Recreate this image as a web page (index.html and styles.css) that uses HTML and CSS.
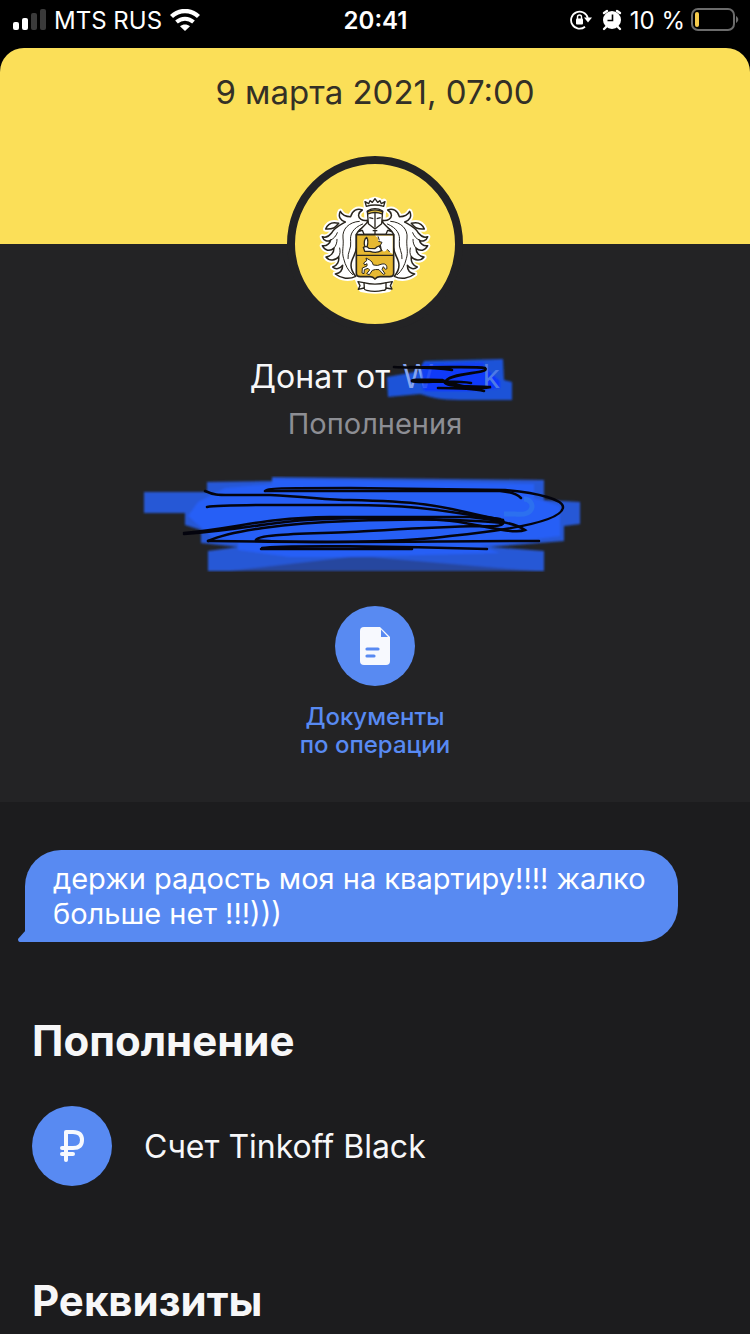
FILE: index.html
```
<!DOCTYPE html>
<html lang="ru">
<head>
    <meta charset="UTF-8">
    <meta name="viewport" content="width=device-width, initial-scale=1.0">
    <title>Операция</title>
    <link rel="stylesheet" href="styles.css">
</head>
<body>

    <div class="status-bar">
        <div class="status-left">
            <svg class="signal" width="34" height="22" viewBox="0 0 34 22" aria-hidden="true">
                <rect x="1" y="13" width="6" height="8" rx="2" fill="#fff"/>
                <rect x="10" y="9" width="6" height="12" rx="2" fill="#fff"/>
                <rect x="19" y="4" width="6" height="17" rx="2" fill="#3a3a3a"/>
                <rect x="28" y="0" width="6" height="21" rx="2" fill="#3a3a3a"/>
            </svg>
            <span>MTS RUS</span>
            <svg width="30" height="22" viewBox="0 0 30 22" aria-hidden="true">
                <path d="M1.500 7.500C9 .2 21 .2 28.500 7.500" fill="none" stroke="#fff" stroke-width="4.400"/>
                <path d="M6.500 13C11.500 8.600 18.500 8.600 23.500 13" fill="none" stroke="#fff" stroke-width="4"/>
                <path d="M10 17.200C13 14.800 17 14.800 20 17.200L15 22Z" fill="#fff"/>
            </svg>
        </div>
        <div class="status-time">20:41</div>
        <div class="status-right">
            <svg class="lock" width="22" height="22" viewBox="0 0 22 22" aria-hidden="true">
                <path d="M15 17.700A8.500 8.500 0 1 1 17.800 9" fill="none" stroke="#fff" stroke-width="1.800"/>
                <path d="M14 8.500H22L18 13.500Z" fill="#fff"/>
                <rect x="6" y="9.500" width="7" height="6" rx="1" fill="#fff"/>
                <path d="M7.500 10V8A2 2 0 0 1 11.500 8V10" fill="none" stroke="#fff" stroke-width="1.400"/>
            </svg>
            <svg class="alarm" width="20" height="22" viewBox="0 0 20 22" aria-hidden="true">
                <circle cx="10" cy="11" r="9" fill="#fff"/>
                <path d="M2 4L5 2M18 4L15 2M4 18L2 20M16 18L18 20" stroke="#fff" stroke-width="2.400" stroke-linecap="round"/>
                <path d="M10.500 5.500V11.500H5.500" fill="none" stroke="#000" stroke-width="1.600"/>
            </svg>
            <span>10 %</span>
            <svg width="48" height="24" viewBox="0 0 48 24" aria-hidden="true">
                <rect x="1" y="1" width="42" height="21" rx="6" fill="none" stroke="#6b6b6b" stroke-width="2"/>
                <rect x="4" y="4" width="4" height="15" rx="2" fill="#f6cb4c"/>
                <path d="M45 8C48 10 48 13 45 15Z" fill="#6b6b6b"/>
            </svg>
        </div>
    </div>

    <main class="sheet">
        <div class="banner">9 марта 2021, 07:00</div>

        <section class="summary">
            <div class="avatar">
                <svg width="130" height="115" viewBox="0 3 390 345" role="img" aria-label="Tinkoff">
                    <defs>
                        <g id="mantle">
                            <path d="M172 103C158 106 144 98 146 86C147 78 152 75 157 72C142 65 127 74 122 92C108 92 96 86 91 76C83 92 92 104 106 108C88 118 72 126 64 142C56 152 46 156 37 152C41 165 54 168 62 162C60 172 50 182 37 179C44 194 60 198 72 186C72 200 62 212 48 213C58 226 76 224 86 212C88 226 82 240 68 243C78 252 90 248 98 238C98 252 90 262 76 264C94 278 118 281 137 271C126 258 120 242 125 226C129 211 139 201 139 184V145C145 133 158 123 172 116Z"/>
                            <path d="M47 129C54 112 68 107 86 112C78 119 76 131 47 129Z"/>
                        </g>
                        <g id="veins">
                            <path d="M148 106C116 108 96 130 99 156C102 182 94 196 101 218C106 238 114 254 128 266"/>
                            <path d="M158 114C128 126 119 146 122 166C125 186 112 200 114 218"/>
                            <path d="M62 162C72 158 78 150 82 140M72 186C79 178 81 170 81 160M86 212C91 204 91 196 89 186"/>
                        </g>
                    </defs>
                    <g fill="#fff" stroke="#fff" stroke-width="16" stroke-linejoin="round">
                        <use href="#mantle"/>
                        <use href="#mantle" transform="translate(390 0) scale(-1 1)"/>
                        <path d="M168 46L176 53L182 44L195 40L208 44L214 53L222 46L218 112L251 145V270L242 285L236 310Q195 320 154 310L145 286L139 270V145L172 112Z"/>
                    </g>
                    <g fill="#fff" stroke="#29251d" stroke-width="4.500" stroke-linejoin="round">
                        <use href="#mantle"/>
                        <use href="#mantle" transform="translate(390 0) scale(-1 1)"/>
                    </g>
                    <g fill="none" stroke="#29251d" stroke-width="3" stroke-linecap="round">
                        <use href="#veins"/>
                        <use href="#veins" transform="translate(390 0) scale(-1 1)"/>
                    </g>
                    <g fill="#fff" stroke="#29251d" stroke-width="4" stroke-linejoin="round">
                        <path d="M169 61L165 47L176 53L180 44L187 49L195 38L203 49L210 44L214 53L225 47L221 61Q195 53 169 61Z"/>
                        <path d="M173 108L145 137L157 133L162 145H228L233 133L245 137L217 108Z"/>
                        <path d="M172 75Q195 61 218 75L215 113L195 129L175 113Z"/>
                        <path d="M172 77Q195 66 218 77L216 84Q195 75 174 84Z" fill="#d9b83d"/>
                        <path d="M195 80V125M178 95L190 98M212 95L200 98" fill="none"/>
                        <path d="M188 134H202M195 134V144" fill="none"/>
                        <path d="M139 146H251V262Q251 272 239 272H210Q201 272 195 279Q189 272 180 272H151Q139 272 139 262Z" fill="#e7b932" stroke-width="5"/>
                        <path d="M195 149H248V204Q237 200 231 190Q224 202 216 193L207 184L215 169L205 166L204 155Z" stroke="none"/>
                        <path d="M139 208H251"/>
                        <path d="M165 182C160 169 164 158 170 154C175 162 174 173 171 183Z"/>
                        <path d="M160 184Q170 179 177 187L194 188Q201 181 211 179L214 194Q199 203 180 196H164Z"/>
                        <path d="M205 166L216 169L208 183L217 195M232 190L239 198M204 151L208 163" fill="none" stroke-width="3"/>
                        <path d="M168 216L179 222Q188 227 190 237Q203 241 216 234Q231 231 231 248L226 250L220 242L216 250L225 263L220 265L207 251Q196 249 187 253L178 266L170 263L179 252L174 247L163 251L162 263L156 261L157 246L171 240L171 233L164 237L161 231L170 224Z" stroke-width="3"/>
                        <path d="M144 287L161 290Q195 299 229 290L247 287L241 299L246 309L228 306Q228 314 218 313Q195 319 170 313Q163 312 162 306L145 310L150 299Z"/>
                        <path d="M162 289L163 307M228 289V307" fill="none"/>
                    </g>
                </svg>
            </div>

            <h1 class="title">
                <span>Донат от</span>
                <span class="hidden-name">
                    <svg class="name-ink" width="130" height="50" viewBox="385 355 130 50" aria-hidden="true">
                        <defs>
                            <filter id="soft" x="-5%" y="-10%" width="110%" height="120%"><feGaussianBlur stdDeviation="1"/></filter>
                        </defs>
                        <g filter="url(#soft)">
                            <path d="M387 377L420 371L424 361L503 359L504 380L512 382V400H460C440 400 430 397 420 394L388 397Z" fill="#1e52d8"/>
                            <path d="M428 368H485L500 381V388L470 391H424Z" fill="#0b35ff"/>
                        </g>
                    </svg>
                    <span class="letter">W</span><span class="letter faint">k</span>
                    <svg class="name-ink" width="130" height="50" viewBox="385 355 130 50" aria-hidden="true">
                        <path d="M422 364L484 362V389H422Z" fill="#0d3cf8" fill-opacity=".8" filter="url(#soft)"/>
                        <path d="M394 367C410 368 430 367 452 370M410 367C440 368 475 366 485 368C492 374 445 372 445 383C448 387 470 386 491 387C477 390 452 385 442 380C425 380 411 379 412 381C418 384 450 379 471 383M438 388C455 388 472 388 484 391" fill="none" stroke="#05050c" stroke-width="2.600" stroke-linecap="round"/>
                    </svg>
                </span>
            </h1>
            <p class="category">Пополнения</p>

            <svg class="amount-ink" width="490" height="96" viewBox="130 476 490 96" aria-hidden="true">
                <g filter="url(#soft)">
                    <path d="M144 492H207V482L272 481V477L544 480V500L580 502V524L564 526V541L490 547L544 551V571H208V551L238 547L201 543V530L185 525V513H144Z" fill="#2858d6"/>
                    <path d="M198 502L225 488L272 484V479L534 484V498L560 506V536L480 546L500 553L350 557H290L238 550V542L212 537L188 516Z" fill="#275ef6"/>
                    <path d="M230 571L350 557H370L535 571Z" fill="#26479f"/>
                </g>
                <path d="M504 514H515C537 517 535 499 524 499" fill="none" stroke="#2c70ef" stroke-width="5"/>
                <g fill="none" stroke="#04040e" stroke-width="2.500" stroke-linecap="round">
                    <path d="M265 491C266 488 280 488 350 488C430 489 490 490 505 490C540 493 563 500 563 507C563 521 510 530 450 536C410 542 340 543 208 541"/>
                    <path d="M266 491H500C512 492 518 495 521 498"/>
                    <path d="M205 491C214 495 217 495 230 495H270C310 497 328 500 350 500C450 502 450 511 503 520C506 526 496 527 480 526C430 527 390 530 350 532C300 534 258 534 256 540"/>
                    <path d="M207 507C225 504 300 505 350 505C430 505 454 514 500 519"/>
                    <path d="M184 533C245 527 260 518 330 517H470C490 519 515 523 525 530C515 534 487 527 465 523C440 518 400 518 370 518C270 518 260 529 184 534"/>
                    <path d="M208 541C230 531 285 523 350 521C400 519 455 518 503 523"/>
                    <path d="M256 540C270 544 440 541 539 541"/>
                    <path d="M261 549H412M262 548C280 545 400 546 487 549"/>
                </g>
            </svg>

            <button class="docs-button" type="button">
                <span class="circle">
                    <svg width="30" height="38" viewBox="0 0 30 38" aria-hidden="true">
                        <path d="M4 0H20L30 10V34Q30 38 26 38H4Q0 38 0 34V4Q0 0 4 0Z" fill="#f7f9fe"/>
                        <path d="M21 2.500L28 10H21Z" fill="#588af2"/>
                        <path d="M7 22H18M7 29H14" stroke="#588af2" stroke-width="3.200" stroke-linecap="round"/>
                    </svg>
                </span>
                <span>Документы<br>по операции</span>
            </button>
        </section>

        <section class="details">
            <div class="message">
                держи радость моя на квартиру!!!! жалко больше нет !!!)))
                <svg class="message-tail" width="10" height="12" viewBox="0 0 10 12" aria-hidden="true">
                    <path d="M8 0L0 9Q0 12 2 12H10V0Z" fill="#588af2"/>
                </svg>
            </div>

            <h2>Пополнение</h2>
            <div class="account">
                <span class="circle">
                    <svg width="26" height="34" viewBox="0 0 26 34" aria-hidden="true">
                        <path d="M7 31V3H14C20 3 23 6 23 11C23 16 20 19 14 19H3M3 25H14" fill="none" stroke="#f7f9fe" stroke-width="4" stroke-linecap="round" stroke-linejoin="round"/>
                    </svg>
                </span>
                <span>Счет Tinkoff Black</span>
            </div>

            <h2>Реквизиты</h2>
        </section>
    </main>

</body>
</html>
```
FILE: styles.css
```
* {
    box-sizing: border-box;
}

body {
    margin: 0;
    min-height: 100vh;
    background-color: #000;
    color: #f7f7f8;
    font-family: Inter, "Liberation Sans", sans-serif;
    display: flex;
    flex-direction: column;
}

.status-bar {
    display: grid;
    grid-template-columns: 1fr auto 1fr;
    align-items: center;
    height: 48px;
    padding: 0 11px 8px 12px;
    color: #fff;
    font-size: 24px;
}

.status-left,
.status-right {
    display: flex;
    align-items: center;
    gap: 8px;
}

.status-right {
    justify-content: flex-end;
    gap: 6px;
}

.alarm {
    margin: 0 2px 0 4px;
}

.status-time {
    font-weight: 600;
}

.sheet {
    flex: 1;
    display: flex;
    flex-direction: column;
    border-radius: 24px 24px 0 0;
    background-color: #1c1c1e;
    overflow: hidden;
}

.banner {
    height: 196px;
    padding-top: 24px;
    background-color: #fbdf58;
    color: #333026;
    font-size: 33px;
    line-height: 40px;
    text-align: center;
}

.summary {
    display: flex;
    flex-direction: column;
    align-items: center;
    padding-bottom: 43px;
    background-color: #232325;
}

.avatar {
    display: flex;
    justify-content: center;
    align-items: center;
    width: 176px;
    height: 176px;
    margin-top: -88px;
    border: 8px solid #232325;
    border-radius: 50%;
    background-color: #fbdf58;
}

.title {
    display: flex;
    gap: 12px;
    margin: 25px 0 0;
    font-size: 32px;
    font-weight: 400;
    line-height: 40px;
}

.hidden-name {
    position: relative;
    display: flex;
    justify-content: space-between;
    width: 98px;
}

.letter {
    position: relative;
    color: #86a6f0;
}

.letter.faint {
    color: #4d7ae6;
}

.name-ink {
    position: absolute;
    top: -2px;
    left: -17px;
}

.category {
    margin: 9px 0 0;
    color: #8d8e94;
    font-size: 29px;
    line-height: 36px;
}

.amount-ink {
    margin-top: 34px;
}

.docs-button {
    display: flex;
    flex-direction: column;
    align-items: center;
    gap: 17px;
    margin-top: 34px;
    padding: 0;
    border: none;
    background: none;
    color: #588af2;
    font-family: inherit;
    font-size: 24px;
    font-weight: 500;
    line-height: 28px;
    cursor: pointer;
}

.circle {
    display: flex;
    justify-content: center;
    align-items: center;
    width: 80px;
    height: 80px;
    border-radius: 50%;
    background-color: #588af2;
}

.details {
    padding: 48px 32px 0;
}

.message {
    position: relative;
    max-width: 653px;
    margin: 0 40px 0 -7px;
    padding: 11px 28px;
    border-radius: 36px 36px 36px 0;
    background-color: #588af2;
    color: #fff;
    font-size: 29px;
    line-height: 35px;
}

.message-tail {
    position: absolute;
    bottom: 0;
    left: -7px;
}

h2 {
    margin: 73px 0 0;
    font-size: 42px;
    font-weight: 700;
    line-height: 52px;
}

.account {
    display: flex;
    align-items: center;
    gap: 32px;
    margin: 39px 0 0;
    font-size: 32px;
}

.account + h2 {
    margin-top: 89px;
}
```
